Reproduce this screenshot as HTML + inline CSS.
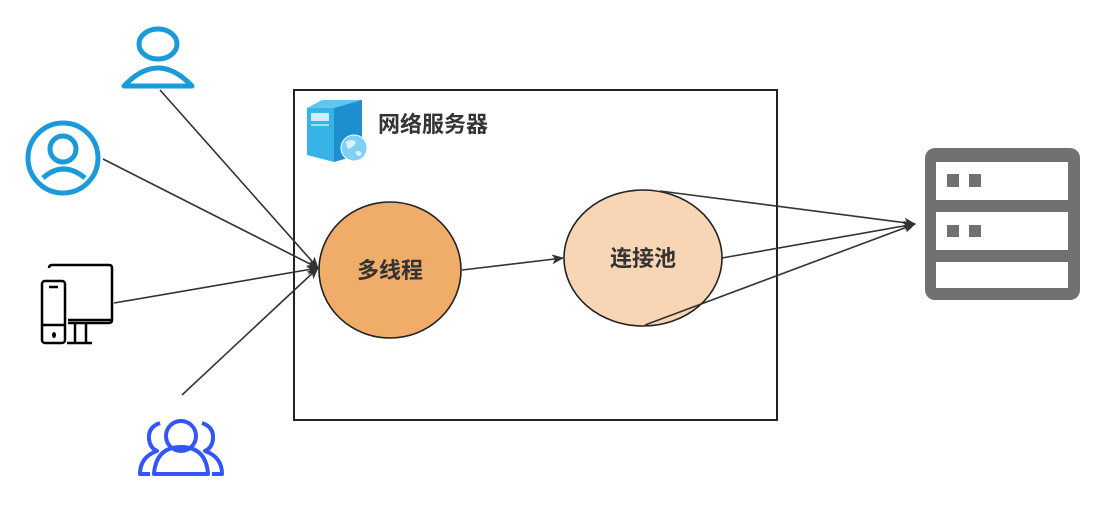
<!DOCTYPE html>
<html><head><meta charset="utf-8"><style>
html,body{margin:0;padding:0;background:#fff;width:1116px;height:521px;overflow:hidden}
text{font-family:"Liberation Sans","Noto Sans CJK SC",sans-serif;font-weight:bold}
</style></head><body>
<svg width="1116" height="521" viewBox="0 0 1116 521" xmlns="http://www.w3.org/2000/svg">
<defs><marker id="a" markerWidth="12" markerHeight="10" refX="11" refY="5" orient="auto" markerUnits="userSpaceOnUse"><path d="M0,0 L12,5 L0,10 L3,5 Z" fill="#333"/></marker></defs>
<rect x="294" y="90" width="483" height="330" fill="none" stroke="#222" stroke-width="2"/>
<polygon points="307,108 322,100 362,100 348,108" fill="#5ec6ef"/>
<polygon points="307,108 334,108 334,162 307,155" fill="#38b3e8"/>
<polygon points="334,108 362,100 362,154 334,162" fill="#1d8fcf"/>
<rect x="311" y="113" width="18" height="8" fill="#cdeefc"/>
<line x1="311" y1="125" x2="329" y2="125" stroke="#cdeefc" stroke-width="1.5"/>
<circle cx="354" cy="148" r="13" fill="#7fd0f4" stroke="#fff" stroke-width="1"/>
<path d="M346,142 q5,-4 10,0 q-2,5 -6,6 q-3,3 -4,-6z M355,152 q5,-3 7,2 q-4,5 -7,-2z" fill="#d8f2fc"/>
<text x="378" y="132" font-size="22" fill="#333">网络服务器</text>
<g stroke="#333" stroke-width="1.6" fill="none">
<line x1="160" y1="90" x2="318" y2="268" marker-end="url(#a)"/>
<line x1="103" y1="159" x2="318" y2="268" marker-end="url(#a)"/>
<line x1="114" y1="303" x2="318" y2="268" marker-end="url(#a)"/>
<line x1="182" y1="395" x2="318" y2="268" marker-end="url(#a)"/>
<line x1="462" y1="270" x2="563" y2="258" marker-end="url(#a)"/>
</g>
<ellipse cx="390" cy="270" rx="71" ry="68" fill="#f0ac69" stroke="#222" stroke-width="1.6"/>
<text x="390" y="278" font-size="22" fill="#333" text-anchor="middle">多线程</text>
<ellipse cx="643" cy="258" rx="79" ry="68" fill="#f8d5b5" stroke="#222" stroke-width="1.6"/>
<text x="643" y="266" font-size="22" fill="#333" text-anchor="middle">连接池</text>
<g stroke="#333" stroke-width="1.6" fill="none">
<line x1="660" y1="191" x2="915" y2="224" marker-end="url(#a)"/>
<line x1="722" y1="258" x2="915" y2="224" marker-end="url(#a)"/>
<line x1="645" y1="325" x2="915" y2="224" marker-end="url(#a)"/>
</g>
<rect x="925" y="148" width="155" height="152" rx="10" fill="#717171"/>
<rect x="936" y="162" width="132" height="38" fill="#fff"/>
<rect x="936" y="212" width="132" height="38" fill="#fff"/>
<rect x="936" y="262" width="132" height="26" fill="#fff"/>
<g fill="#717171"><rect x="947" y="174" width="12" height="13"/><rect x="969" y="174" width="12" height="13"/><rect x="947" y="225" width="12" height="12"/><rect x="969" y="225" width="12" height="12"/></g>
<g stroke="#1a9ad9" stroke-width="5" fill="none">
<ellipse cx="158" cy="44" rx="19" ry="15"/>
<path d="M124,86 Q158,50 192,86 Z" stroke-linejoin="round"/>
<circle cx="63" cy="158" r="35"/>
<circle cx="63" cy="149" r="13"/>
<path d="M43,178 Q63,160 85,178"/>
</g>
<g stroke="#000" stroke-width="2.5" fill="none">
<path d="M49,268 q0,-3 3,-3 h57 q3,0 3,3 v52 q0,3 -3,3 h-41"/>
<line x1="68" y1="320" x2="111" y2="320"/>
<line x1="75" y1="323" x2="75" y2="342"/><line x1="86" y1="323" x2="86" y2="342"/>
<line x1="67" y1="343" x2="92" y2="343"/>
<rect x="42" y="281" width="23" height="62" rx="3"/>
<line x1="49" y1="287" x2="58" y2="287"/>
<line x1="42" y1="325" x2="65" y2="325"/>
</g>
<ellipse cx="54" cy="335" rx="2" ry="3" fill="#000"/>
<g stroke="#3355ff" stroke-width="4" fill="none" stroke-linejoin="round">
<circle cx="181" cy="436" r="15"/>
<path d="M154,474 Q156,447 181,447 Q206,447 208,474 Z"/>
<path d="M160,423 q-12,4 -11,16 q1,9 8,12 q-17,6 -17,23 h10"/>
<path d="M202,423 q12,4 11,16 q-1,9 -8,12 q17,6 17,23 h-10"/>
</g>
</svg>
</body></html>
